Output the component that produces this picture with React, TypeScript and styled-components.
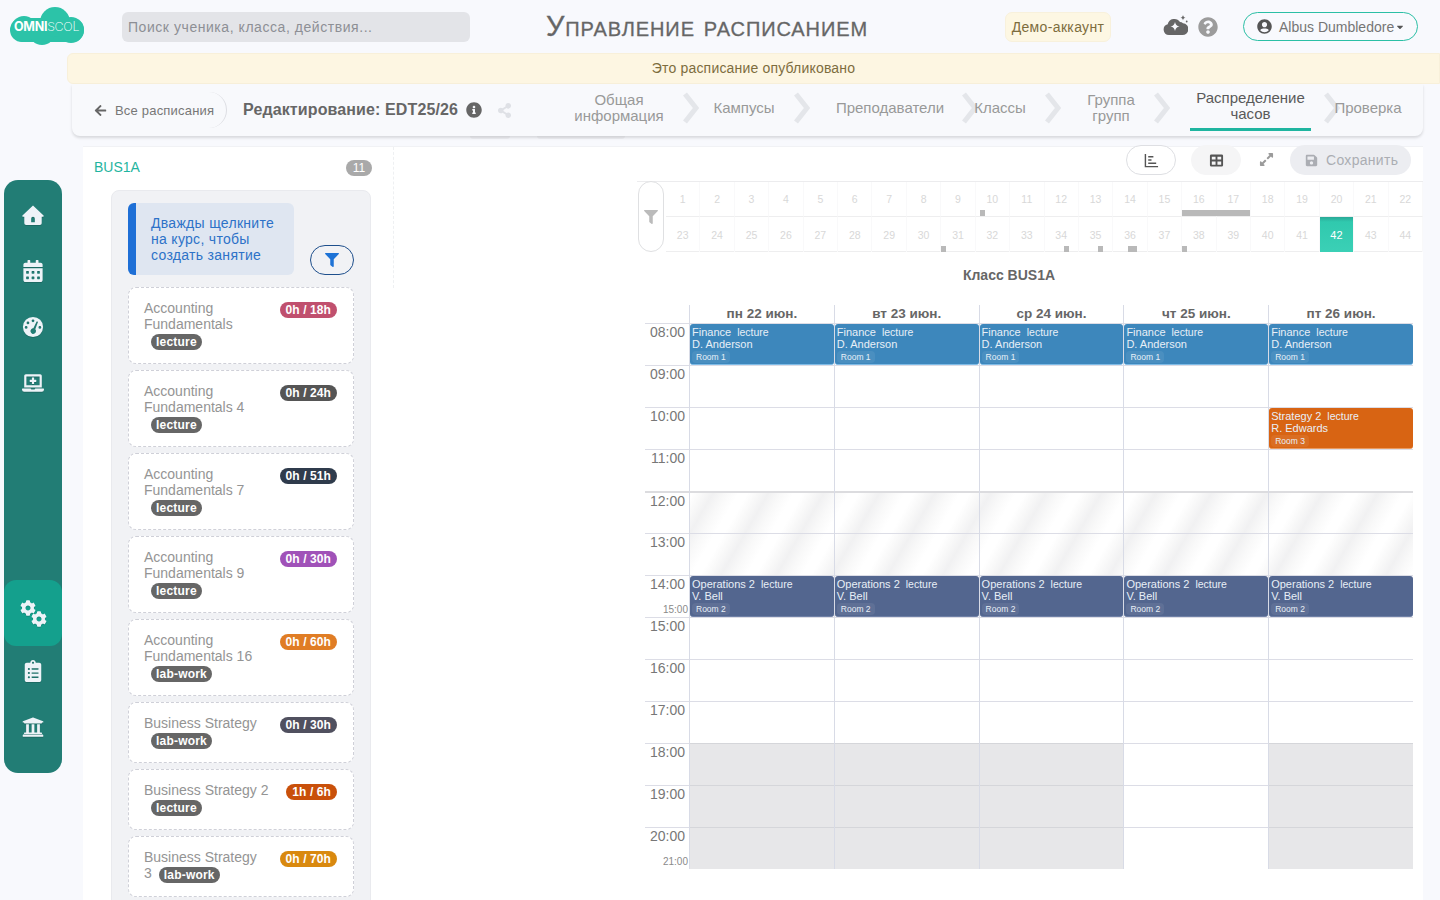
import React from "react";
import styled, { createGlobalStyle } from "styled-components";
import {
  FaCog, FaCalendarAlt, FaLaptopMedical, FaClipboardList, FaUniversity,
  FaFilter, FaInfoCircle, FaShareAlt, FaQuestionCircle, FaUserCircle, FaSave, FaExpandAlt, FaArrowLeft, FaCaretDown,
} from "react-icons/fa";

const Global = createGlobalStyle`
  * { box-sizing: border-box; }
  html, body { margin: 0; padding: 0; height: 100%; overflow: hidden; }
  body { background: #f8f9fd; font-family: "Liberation Sans", Arial, sans-serif; color: #666; }
`;

const Page = styled.div`
  width: 1440px;
  height: 900px;
  overflow: hidden;
  display: grid;
  grid-template-columns: 67px 1fr;
  grid-template-rows: 53px 1fr;
`;

/* ---------- header ---------- */
const Header = styled.header`
  grid-column: 1 / 3;
  display: flex;
  align-items: center;
  padding: 0 22px 0 10px;
`;
const LogoBox = styled.div`
  position: relative;
  width: 74px;
  height: 38px;
  margin-top: -1px;
  flex: none;
`;
const LogoText = styled.span`
  position: absolute;
  left: 4px;
  top: 13px;
  font: 200 12.5px/13px Inter, "Liberation Sans", sans-serif;
  letter-spacing: -0.3px;
  color: #fff;
  white-space: nowrap;
  b { font-weight: 700; }
`;
const Search = styled.div`
  width: 348px;
  height: 30px;
  margin-left: 38px;
  margin-top: 1px;
  border-radius: 6px;
  background: #e3e4e8;
  color: #8d8f95;
  font-size: 14px;
  line-height: 30px;
  padding-left: 6px;
  letter-spacing: 0.55px;
`;
const Title = styled.h1`
  margin: -2px 0 0 76px;
  font-size: 29px;
  line-height: 34px;
  font-weight: 400;
  font-variant: small-caps;
  color: #666;
  -webkit-text-stroke: 0.3px #666;
  letter-spacing: 0.9px;
  white-space: nowrap;
`;
const DemoBadge = styled.div`
  margin-left: auto;
  width: 106px;
  height: 30px;
  margin-top: 1px;
  border-radius: 7px;
  background: #fdf7e3;
  border: 1px solid #f8f1dc;
  color: #7d6d3e;
  font-size: 14px;
  letter-spacing: 0.35px;
  line-height: 28px;
  text-align: center;
`;
const CloudIcon = styled.svg`
  width: 25px;
  height: 24px;
  margin-left: 52px;
  margin-top: -2px;
  color: #666;
`;
const HelpIcon = styled(FaQuestionCircle)`
  width: 20px;
  height: 20px;
  margin-left: 10px;
  margin-top: 0;
  color: #9c9c9c;
`;
const UserButton = styled.div`
  width: 175px;
  height: 29px;
  margin-left: 25px;
  border: 1px solid #2bbfa5;
  border-radius: 15px;
  display: flex;
  align-items: center;
  padding-left: 13px;
  font-size: 14px;
  color: #757575;
  white-space: nowrap;
  svg:first-child { width: 15px; height: 15px; color: #555; margin-right: 7px; }
  svg:last-child { width: 10px; height: 10px; color: #555; margin-left: 1px; }
`;

/* ---------- sidebar ---------- */
const SideColumn = styled.div`
  padding: 127px 0 0 4px;
`;
const Sidebar = styled.nav`
  width: 58px;
  height: 593px;
  border-radius: 14px;
  background: #227d75;
  padding: 7px 0 18px;
  display: flex;
  flex-direction: column;
  justify-content: space-between;
  color: #eef3f8;
`;
const SideGroup = styled.div`
  display: flex;
  flex-direction: column;
`;
const SideItem = styled.div<{ $active?: boolean }>`
  height: ${(p) => (p.$active ? 66 : 56)}px;
  margin-bottom: ${(p) => (p.$active ? -3 : 0)}px;
  border-radius: 12px;
  display: flex;
  align-items: center;
  justify-content: center;
  background: ${(p) => (p.$active ? "#14a08d" : "transparent")};
  svg { height: 22px; width: auto; filter: drop-shadow(0 1px 0 rgba(0,0,0,.15)); }
`;
const CogPair = styled.div`
  width: 27px;
  height: 27px;
  display: flex;
  justify-content: space-between;
  svg { width: 16px; height: 16px; flex: none; }
  svg:first-child { margin-right: -6px; }
  svg:last-child { align-self: flex-end; }
`;

/* ---------- main ---------- */
const Main = styled.main`
  display: flex;
  flex-direction: column;
  min-height: 0;
`;
const Notice = styled.div`
  height: 31px;
  flex: none;
  background: #fdf6e2;
  border: 1px solid #f8f0da;
  border-radius: 6px 0 0 6px;
  color: #7d6d3e;
  font-size: 14px;
  letter-spacing: 0.18px;
  line-height: 29px;
  text-align: center;
`;
const NavBar = styled.div`
  height: 52px;
  flex: none;
  margin: 0 17px 0 5px;
  padding-right: 20px;
  display: flex;
  align-items: center;
  justify-content: space-between;
  background: #f8f9fc;
  border-radius: 0 0 8px 8px;
  box-shadow: 0 2px 3px rgba(0, 0, 0, 0.13);
  position: relative;
  z-index: 2;
  &::before, &::after {
    content: "";
    position: absolute;
    bottom: -3px;
    height: 3px;
    border-radius: 0 0 8px 8px;
    background: rgba(0, 0, 0, 0.035);
  }
  &::before { left: 398px; width: 40px; }
  &::after { left: 465px; width: 88px; }
`;
const NavLeft = styled.div`
  display: flex;
  align-items: center;
`;
const BackLink = styled.div`
  width: 155px;
  height: 36px;
  padding-left: 22px;
  display: flex;
  align-items: center;
  gap: 8px;
  border-right: 1px solid #dcdde2;
  border-radius: 0 18px 18px 0;
  color: #777;
  font-size: 13px;
  letter-spacing: 0.2px;
  white-space: nowrap;
  svg { width: 13px; height: 13px; color: #666; }
`;
const EditTitle = styled.div`
  margin-left: 16px;
  font-size: 16px;
  letter-spacing: 0.12px;
  font-weight: 700;
  color: #666;
  white-space: nowrap;
`;
const InfoIcon = styled(FaInfoCircle)`
  width: 16px;
  height: 16px;
  margin-left: 8px;
  color: #666;
`;
const ShareIcon = styled(FaShareAlt)`
  width: 15px;
  height: 15px;
  margin-left: 15px;
  color: #dfe1e6;
`;
const Steps = styled.div`
  display: flex;
  align-items: center;
`;
const Step = styled.div<{ $w: number; $active?: boolean }>`
  width: ${(p) => p.$w}px;
  flex: none;
  text-align: center;
  font-size: 15px;
  line-height: 16px;
  color: ${(p) => (p.$active ? "#5a5a5a" : "#999")};
  position: relative;
  z-index: 1;
  ${(p) =>
    p.$active
      ? `padding-bottom: 6px; border-bottom: 3px solid #1fb5a0;`
      : `margin-bottom: 4px;`}
`;
const Chevron = styled.svg<{ $before?: number; $after?: number }>`
  width: 16px;
  height: 32px;
  flex: none;
  margin: -4px ${(p) => p.$after ?? 0}px 0 ${(p) => p.$before ?? 0}px;
  color: #e4e6ea;
`;

const Content = styled.div`
  flex: 1;
  min-height: 0;
  margin: 10px 17px 0 16px;
  background: #fff;
  border-top: 1px solid #f1f2f5;
  display: flex;
`;
const LeftColumn = styled.section`
  width: 554px;
  flex: none;
  position: relative;
  &::after {
    content: "";
    position: absolute;
    left: 310px;
    top: 0;
    height: 141px;
    border-right: 1px dashed #eef0f2;
  }
`;
const ClassHead = styled.div`
  width: 310px;
  height: 43px;
  padding: 0 21px 3px 11px;
  display: flex;
  align-items: center;
  justify-content: space-between;
`;
const ClassName = styled.span`
  font-size: 14px;
  color: #1fb5a0;
`;
const CountBadge = styled.span`
  width: 26px;
  height: 16px;
  margin-top: 2px;
  border-radius: 8px;
  background: #a9a9a9;
  color: #fff;
  font-size: 12px;
  line-height: 16px;
  text-align: center;
`;
const CourseBox = styled.div`
  width: 260px;
  height: 800px;
  margin-left: 28px;
  padding: 12px 16px 0;
  background: #f1f2f5;
  border: 1px solid #e9eaee;
  border-radius: 8px 8px 0 0;
  display: flex;
  flex-direction: column;
  gap: 6px;
`;
const HintRow = styled.div`
  display: flex;
  align-items: flex-end;
  justify-content: space-between;
  margin-bottom: 6px;
`;
const Hint = styled.div`
  width: 166px;
  height: 72px;
  padding: 12px 6px 0 15px;
  background: #dfe6f1;
  border-left: 8px solid #1e6fd6;
  border-radius: 6px;
  color: #2d72c8;
  font-size: 14px;
  letter-spacing: 0.3px;
  line-height: 16px;
`;
const FilterButton = styled.div`
  width: 44px;
  height: 30px;
  border: 1px solid #1e4f8c;
  border-radius: 15px;
  display: flex;
  align-items: center;
  justify-content: center;
  color: #1e73d6;
  svg { width: 14px; height: 14px; }
`;
const Card = styled.div`
  flex: none;
  display: flex;
  justify-content: space-between;
  align-items: flex-start;
  padding: 12px 16px 13px 15px;
  background: #fff;
  border: 1px dashed #cfd0d8;
  border-radius: 8px;
`;
const CardText = styled.div`
  flex: 1;
  min-width: 0;
  padding-right: 12px;
  font-size: 14px;
  line-height: 16px;
  color: #949494;
`;
const Tag = styled.span`
  display: inline-block;
  height: 16px;
  margin: 2px 0 0 7px;
  padding: 0 5px;
  border-radius: 8px;
  background: #666;
  color: #fff;
  font-size: 12px;
  letter-spacing: 0.2px;
  font-weight: 700;
  line-height: 16px;
  vertical-align: top;
`;
const Hours = styled.span<{ $color: string }>`
  flex: none;
  height: 16px;
  margin-top: 2px;
  padding: 0 6px;
  border-radius: 8px;
  background: ${(p) => p.$color};
  color: #fff;
  font-size: 12px;
  letter-spacing: 0.1px;
  font-weight: 700;
  line-height: 16px;
  white-space: nowrap;
`;

/* ---------- calendar ---------- */
const CalendarColumn = styled.section`
  flex: 1;
  min-width: 0;
`;
const Toolbar = styled.div`
  height: 34px;
  padding-right: 12px;
  display: flex;
  align-items: flex-start;
  justify-content: flex-end;
`;
const ToolButton = styled.div<{ $filled?: boolean }>`
  width: 50px;
  height: 30px;
  margin: -2px 0 0 15px;
  border-radius: 15px;
  display: flex;
  align-items: center;
  justify-content: center;
  background: ${(p) => (p.$filled ? "#f5f5f6" : "#fff")};
  border: 1px solid ${(p) => (p.$filled ? "#f5f5f6" : "#dedfe3")};
  svg { width: 15px; height: 15px; color: #555; }
`;
const ExpandIcon = styled(FaExpandAlt)`
  width: 15px;
  height: 15px;
  margin: 5px 0 0 18px;
  color: #9a9a9a;
`;
const SaveButton = styled.div`
  width: 121px;
  height: 30px;
  margin: -2px 0 0 16px;
  padding-left: 15px;
  border-radius: 15px;
  background: #ecedf1;
  color: #abadb3;
  font-size: 14px;
  letter-spacing: 0.3px;
  display: flex;
  align-items: center;
  gap: 8px;
  svg { width: 13px; height: 13px; }
`;
const Strip = styled.div`
  height: 71px;
  display: flex;
  border-top: 1px solid #ececee;
`;
const StripFilter = styled.div`
  width: 26px;
  height: 71px;
  margin: -1px 2px 0 1px;
  border: 1px solid #dfe0e2;
  border-radius: 13px;
  background: #fff;
  display: flex;
  align-items: center;
  justify-content: center;
  flex: none;
  color: #bbb;
  svg { width: 14px; height: 14px; }
`;
const Weeks = styled.div`
  flex: 1;
  display: grid;
  grid-template-columns: repeat(22, 1fr);
  grid-template-rows: 35px 35px;
  border-bottom: 1px solid #eeeeef;
`;
const Week = styled.div<{ $current?: boolean; $bottom?: boolean }>`
  position: relative;
  border-bottom: ${(p) => (p.$bottom ? "none" : "1px solid #eeeeef")};
  border-right: 1px solid #f9f9fa;
  display: flex;
  align-items: center;
  justify-content: center;
  font-size: ${(p) => (p.$current ? 11 : 10.5)}px;
  color: ${(p) => (p.$current ? "#fff" : "#d8d8d8")};
  background: ${(p) => (p.$current ? "linear-gradient(180deg,#2aa897 0,#30c9ae 14%,#3bd0b6 100%)" : "transparent")};
`;
const WeekMark = styled.span<{ $left: number; $width: number | string }>`
  position: absolute;
  left: ${(p) => p.$left}px;
  width: ${(p) => (typeof p.$width === "number" ? `${p.$width}px` : p.$width)};
  bottom: 0;
  height: 6px;
  background: #b9b9b9;
`;
const CalendarTitle = styled.h2`
  margin: 15px 0 22px;
  padding-right: 42px;
  font-size: 14px;
  line-height: 16px;
  font-weight: 700;
  text-align: center;
  color: #666;
`;
const Schedule = styled.div`
  margin: 0 10px 0 8px;
  display: grid;
  grid-template-columns: 44px repeat(5, 1fr);
`;
const TimeColumn = styled.div`
  padding-top: 18px;
`;
const TimeCell = styled.div`
  position: relative;
  height: 42px;
  border-top: 1px solid #dcdde6;
  padding: 0 4px 0 0;
  text-align: right;
  font-size: 14px;
  line-height: 16px;
  color: #777;
  &:nth-child(5) { border-top: 2px solid #dcdcdf; line-height: 16px; }
`;
const EndTime = styled.span`
  position: absolute;
  right: 1px;
  bottom: 1px;
  font-size: 10px;
  line-height: 12px;
  color: #8a8a8a;
`;
const DayColumn = styled.div`
  border-left: 1px solid #d8dbe6;
`;
const DayName = styled.div`
  height: 18px;
  text-align: center;
  font-size: 13.5px;
  line-height: 17px;
  font-weight: 700;
  color: #666;
`;
const Slot = styled.div<{ $kind: string }>`
  height: 42px;
  border-top: 1px solid ${(p) => (p.$kind === "closed" ? "#d5d6da" : "#dcdde6")};
  ${(p) => p.$kind === "noon" && "border-top: 2px solid #dcdcdf;"}
  ${(p) =>
    (p.$kind === "noon" || p.$kind === "lunch") &&
    `background: repeating-linear-gradient(120deg, #f1f1f2 0, #f9f9f9 11px, #fff 22px, #fff 30px, #f9f9f9 38px, #f1f1f2 48px) fixed;`}
  ${(p) => p.$kind === "closed" && "background: #e7e7e9;"}
`;
const Event = styled.div<{ $color: string; $edge: string }>`
  height: 41px;
  padding: 2px 2px 0 2px;
  border-radius: 3px;
  background: ${(p) => p.$color};
  border-bottom: 1px solid ${(p) => p.$edge};
  color: #e8eff7;
  font-size: 11px;
  line-height: 12px;
  white-space: nowrap;
  overflow: hidden;
`;
const EventRow = styled.div`
  span { margin-left: 6px; font-size: 10.5px; }
`;
const Room = styled.div`
  display: inline-block;
  margin: 1px 0 0 0;
  padding: 0 4px;
  border-radius: 4px;
  background: rgba(255, 255, 255, 0.07);
  font-size: 8.5px;
  line-height: 12px;
`;

/* ---------- data ---------- */
const courses = [
  { t: "Accounting Fundamentals", k: "lecture", h: "0h / 18h", c: "#c0506e" },
  { t: "Accounting Fundamentals 4", k: "lecture", h: "0h / 24h", c: "#555555" },
  { t: "Accounting Fundamentals 7", k: "lecture", h: "0h / 51h", c: "#2f3b4c" },
  { t: "Accounting Fundamentals 9", k: "lecture", h: "0h / 30h", c: "#a052b8" },
  { t: "Accounting Fundamentals 16", k: "lab-work", h: "0h / 60h", c: "#e07d25" },
  { t: "Business Strategy", k: "lab-work", h: "0h / 30h", c: "#50505f" },
  { t: "Business Strategy 2", k: "lecture", h: "1h / 6h", c: "#c9500a" },
  { t: "Business Strategy 3", k: "lab-work", h: "0h / 70h", c: "#d9890f" },
];
const hours = ["08:00","09:00","10:00","11:00","12:00","13:00","14:00","15:00","16:00","17:00","18:00","19:00","20:00"];
const days = ["пн 22 июн.", "вт 23 июн.", "ср 24 июн.", "чт 25 июн.", "пт 26 июн."];
const marks: Record<number, { left: number; width: number | string }> = {
  10: { left: 4, width: 5 },
  16: { left: 0, width: "calc(100% + 1px)" },
  17: { left: 0, width: "100%" },
  31: { left: 0, width: 5 },
  34: { left: 19, width: 5 },
  35: { left: 19, width: 5 },
  36: { left: 15, width: 9 },
  38: { left: 0, width: 5 },
};

const finance = { c: "#3d87bc", e: "#7fbbe6", t: "Finance", who: "D. Anderson", room: "Room 1" };
const operations = { c: "#53668f", e: "#6f80a6", t: "Operations 2", who: "V. Bell", room: "Room 2" };
const strategy = { c: "#d86413", e: "#ea9a5f", t: "Strategy 2", who: "R. Edwards", room: "Room 3" };

function slotKind(i: number, day: number) {
  if (i === 4) return "noon";
  if (i === 5) return "lunch";
  if (i >= 10 && day !== 3) return "closed";
  return "plain";
}
function eventFor(i: number, day: number) {
  if (i === 0) return finance;
  if (i === 6) return operations;
  if (i === 2 && day === 4) return strategy;
  return null;
}

const Line = ({ before, after }: { before?: number; after?: number }) => (
  <Chevron $before={before} $after={after} viewBox="0 0 16 32" fill="none">
    <path d="M2 2 L13 16 L2 30" stroke="currentColor" strokeWidth="5" />
  </Chevron>
);

export default function App() {
  return (
    <Page>
      <Global />
      <Header>
        <LogoBox>
          <svg width="74" height="38" viewBox="0 0 74 38" fill="#2cc3a8">
            <rect x="0" y="11" width="74" height="24" rx="12" />
            <circle cx="14" cy="22" r="13" />
            <circle cx="32" cy="25" r="13" />
            <circle cx="45" cy="15" r="15" />
            <circle cx="61" cy="23" r="13" />
          </svg>
          <LogoText><b>OMNI</b>SCOL</LogoText>
        </LogoBox>
        <Search>Поиск ученика, класса, действия...</Search>
        <Title>Управление расписанием</Title>
        <DemoBadge>Демо-аккаунт</DemoBadge>
        <CloudIcon viewBox="0 0 25 24" fill="currentColor">
          <path fillRule="evenodd" d="M6 21a5.500 5.500 0 0 1-1.300-10.800A6.800 6.800 0 0 1 17 8a4.500 4.500 0 0 1 3 1.300A5.800 5.800 0 0 1 19 21Z M12 8c.6 2.800 1.600 3.800 4.500 4.500-2.900.7-3.900 1.700-4.500 4.500-.6-2.800-1.600-3.800-4.500-4.500 2.900-.7 3.900-1.700 4.500-4.500Z" />
          <path d="M20 1c.3 1.700 1 2.400 2.600 2.700-1.600.3-2.300 1-2.600 2.700-.3-1.700-1-2.400-2.600-2.700C19 3.400 19.700 2.700 20 1Z" />
          <circle cx="23.700" cy="7.500" r=".9" />
        </CloudIcon>
        <HelpIcon />
        <UserButton>
          <FaUserCircle />
          Albus Dumbledore
          <FaCaretDown />
        </UserButton>
      </Header>

      <SideColumn>
        <Sidebar>
          <SideGroup>
            <SideItem>
              <svg viewBox="0 0 24 24" fill="currentColor">
                <path fillRule="evenodd" d="M12 1.500 23.500 12.500c.5.500.2 1.300-.5 1.300h-1.500V21a2 2 0 0 1-2 2H4.500a2 2 0 0 1-2-2v-7.200H1c-.7 0-1-.8-.5-1.300Z M10 16v4h4v-4a2 2 0 0 0-4 0Z" />
              </svg>
            </SideItem>
            <SideItem><FaCalendarAlt /></SideItem>
            <SideItem>
              <svg viewBox="0 0 24 24" fill="currentColor">
                <path fillRule="evenodd" d="M12 1a11 11 0 1 1 0 22 11 11 0 0 1 0-22Z M12 3.800a1.500 1.500 0 1 0 0 3 1.500 1.500 0 0 0 0-3Z M6.500 6a1.500 1.500 0 1 0 0 3 1.500 1.500 0 0 0 0-3Z M4.500 11a1.500 1.500 0 1 0 0 3 1.500 1.500 0 0 0 0-3Z M19.500 11a1.500 1.500 0 1 0 0 3 1.500 1.500 0 0 0 0-3Z M17.500 6.200 16 6l-3.700 7.500a3 3 0 1 0 2.200 1Z" />
              </svg>
            </SideItem>
            <SideItem><FaLaptopMedical /></SideItem>
          </SideGroup>
          <SideGroup>
            <SideItem $active>
              <CogPair><FaCog /><FaCog /></CogPair>
            </SideItem>
            <SideItem><FaClipboardList /></SideItem>
            <SideItem><FaUniversity /></SideItem>
          </SideGroup>
        </Sidebar>
      </SideColumn>

      <Main>
        <Notice>Это расписание опубликовано</Notice>
        <NavBar>
          <NavLeft>
            <BackLink><FaArrowLeft />Все расписания</BackLink>
            <EditTitle>Редактирование: EDT25/26</EditTitle>
            <InfoIcon />
            <ShareIcon />
          </NavLeft>
          <Steps>
            <Step $w={128}>Общая информация</Step>
            <Line />
            <Step $w={90}>Кампусы</Step>
            <Line before={5} />
            <Step $w={160}>Преподаватели</Step>
            <Line before={-8} after={-4} />
            <Step $w={52}>Классы</Step>
            <Line before={19} />
            <Step $w={100}>Группа<br />групп</Step>
            <Line before={-7} after={20} />
            <Step $w={121} $active>Распределение часов</Step>
            <Line before={13} after={-7} />
            <Step $w={70}>Проверка</Step>
          </Steps>
        </NavBar>
        <Content>
          <LeftColumn>
            <ClassHead>
              <ClassName>BUS1A</ClassName>
              <CountBadge>11</CountBadge>
            </ClassHead>
            <CourseBox>
              <HintRow>
                <Hint>Дважды щелкните на курс, чтобы создать занятие</Hint>
                <FilterButton><FaFilter /></FilterButton>
              </HintRow>
              {courses.map((c) => (
                <Card key={c.t}>
                  <CardText>
                    {c.t}<Tag>{c.k}</Tag>
                  </CardText>
                  <Hours $color={c.c}>{c.h}</Hours>
                </Card>
              ))}
            </CourseBox>
          </LeftColumn>
          <CalendarColumn>
            <Toolbar>
              <ToolButton>
                <svg viewBox="0 0 16 16" fill="none" stroke="currentColor" strokeWidth="1.500">
                  <path d="M1.500 1v13.500H15" />
                  <path d="M4.500 4H10M4.500 7.500H8M4.500 11H13" />
                </svg>
              </ToolButton>
              <ToolButton $filled>
                <svg viewBox="0 0 16 16" fill="currentColor">
                  <path fillRule="evenodd" d="M2.500 1.500h11A1.500 1.500 0 0 1 15 3v10a1.500 1.500 0 0 1-1.500 1.500h-11A1.500 1.500 0 0 1 1 13V3a1.500 1.500 0 0 1 1.500-1.500Z M3 4v3h4V4Z M9 4v3h4V4Z M3 9v3.500h4V9Z M9 9v3.500h4V9Z" />
                </svg>
              </ToolButton>
              <ExpandIcon />
              <SaveButton><FaSave />Сохранить</SaveButton>
            </Toolbar>
            <Strip>
              <StripFilter><FaFilter /></StripFilter>
              <Weeks>
                {Array.from({ length: 44 }, (_, i) => i + 1).map((n) => (
                  <Week key={n} $current={n === 42} $bottom={n > 22}>
                    {n}
                    {marks[n] && <WeekMark $left={marks[n].left} $width={marks[n].width} />}
                  </Week>
                ))}
              </Weeks>
            </Strip>
            <CalendarTitle>Класс BUS1A</CalendarTitle>
            <Schedule>
              <TimeColumn>
                {hours.map((h, i) => (
                  <TimeCell key={h}>
                    {h}
                    {i === 6 && <EndTime>15:00</EndTime>}
                    {i === 12 && <EndTime>21:00</EndTime>}
                  </TimeCell>
                ))}
              </TimeColumn>
              {days.map((d, di) => (
                <DayColumn key={d}>
                  <DayName>{d}</DayName>
                  {hours.map((h, i) => {
                    const ev = eventFor(i, di);
                    return (
                      <Slot key={h} $kind={slotKind(i, di)}>
                        {ev && (
                          <Event $color={ev.c} $edge={ev.e}>
                            <EventRow>{ev.t}<span>lecture</span></EventRow>
                            <EventRow>{ev.who}</EventRow>
                            <Room>{ev.room}</Room>
                          </Event>
                        )}
                      </Slot>
                    );
                  })}
                </DayColumn>
              ))}
            </Schedule>
          </CalendarColumn>
        </Content>
      </Main>
    </Page>
  );
}
